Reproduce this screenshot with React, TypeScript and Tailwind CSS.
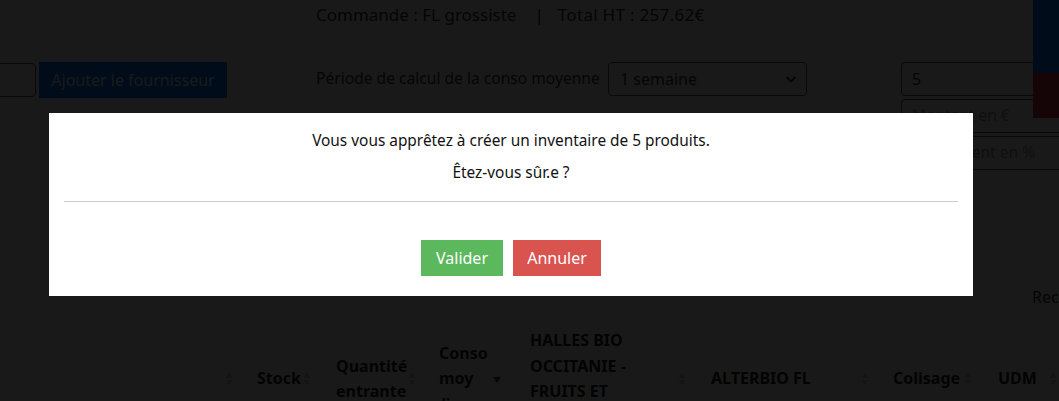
import React from "react";

const font = { fontFamily: '"Noto Sans", "DejaVu Sans", sans-serif' };

function SortIcon({ active }: { active?: boolean }) {
  if (active) {
    return (
      <svg width="8" height="10" viewBox="0 0 8 10" className="shrink-0">
        <path d="M0 3 L8 3 L4 9 Z" fill="#2c3e9e" />
      </svg>
    );
  }
  return (
    <svg width="8" height="14" viewBox="0 0 8 14" className="shrink-0">
      <path d="M0.5 6 L7.5 6 L4 1 Z" fill="#c8c8c8" />
      <path d="M0.5 8 L7.5 8 L4 13 Z" fill="#c8c8c8" />
    </svg>
  );
}

type Col = { label: string[]; w: string; pr: string; active?: boolean };

const cols: Col[] = [
  { label: ["Stock"], w: "w-[79px]", pr: "mr-[17px]" },
  { label: ["Quantité", "entrante"], w: "w-[103px]", pr: "mr-[15px]" },
  { label: ["Conso", "moy", "/jour"], w: "w-[91px]", pr: "mr-[21px]", active: true },
  { label: ["HALLES BIO", "OCCITANIE -", "FRUITS ET", "LÉGUMES"], w: "w-[181px]", pr: "mr-[17px]" },
  { label: ["ALTERBIO FL"], w: "w-[182px]", pr: "mr-[16px]" },
  { label: ["Colisage"], w: "w-[105px]", pr: "mr-[18px]" },
  { label: ["UDM"], w: "w-[80px]", pr: "mr-[13px]" },
];

export default function App() {
  return (
    <div className="relative w-[1059px] h-[401px] overflow-hidden bg-white text-[#333]" style={font}>
      {/* Underlying page */}
      <div className="pl-[316px] pt-[3px] text-[17px] leading-[24px] whitespace-nowrap">
        Commande : FL grossiste<span className="ml-[18px] mr-[14px]">|</span>
        <span className="tracking-[0.3px]">Total HT : 257.62€</span>
      </div>

      <div className="mt-[35px] flex items-start">
        <div className="flex items-center ml-[-100px] shrink-0">
          <div className="w-[136px] h-[34px] border border-[#555] rounded-[4px] bg-white" />
          <div className="ml-[3px] w-[188px] h-[36px] bg-[#007bff] text-white text-[16px] flex items-center justify-center whitespace-nowrap">
            Ajouter le fournisseur
          </div>
        </div>
        <div className="ml-[89px] w-[585px] shrink-0 flex items-center h-[34px]">
          <span className="w-[292px] text-[15.6px] whitespace-nowrap">Période de calcul de la conso moyenne</span>
          <div className="w-[199px] h-[34px] border border-[#555] rounded-[4px] flex items-center justify-between pl-[11px] pr-[8px] text-[16px]">
            <span>1 semaine</span>
            <svg width="14" height="14" viewBox="0 0 14 14">
              <path d="M2.5 5 L7 9.5 L11.5 5" stroke="#333" strokeWidth="1.8" fill="none" />
            </svg>
          </div>
        </div>
        <div className="flex flex-col gap-[3px] shrink-0">
          <div className="w-[200px] h-[34px] border border-[#555] rounded-[4px] flex items-center pl-[10px] text-[16px]">5</div>
          <div className="w-[200px] h-[34px] border border-[#555] rounded-[4px] flex items-center pl-[10px] text-[15.5px] text-[#999]">Montant en €</div>
          <div className="w-[200px] h-[34px] border border-[#555] rounded-[4px] flex items-center pl-[10px] text-[15.5px] text-[#999] whitespace-nowrap">Ajustement en %</div>
        </div>
      </div>

      <div className="mt-[117px] pl-[1032px] text-[16px] leading-[20px] whitespace-nowrap">Rechercher</div>

      <div className="mt-[22px] flex items-center h-[100px]">
        <div className="w-[249px] shrink-0 h-full flex items-center justify-end pr-[16px]">
          <SortIcon />
        </div>
        {cols.map((c, i) => (
          <div key={i} className={`${c.w} shrink-0 h-full flex items-center pl-[8px]`}>
            <div className="font-bold text-[16px] leading-[25.5px] text-[#222] whitespace-nowrap">
              {c.label.map((l, j) => (
                <div key={j}>{l}</div>
              ))}
            </div>
            <div className={`ml-auto ${c.pr} flex items-center`}>
              <SortIcon active={c.active} />
            </div>
          </div>
        ))}
      </div>

      {/* side tabs */}
      <div className="absolute right-0 top-0 w-[26px] flex flex-col">
        <div className="h-[73px] bg-[#007bff]" />
        <div className="h-[45px] bg-[#dc3545]" />
      </div>

      {/* backdrop */}
      <div className="absolute inset-0 bg-black/90" />

      {/* modal */}
      <div className="absolute left-[49px] top-[113px] w-[924px] h-[183px] bg-white px-[15px] pt-[16px] text-[#111]">
        <p className="text-center text-[15.4px] leading-[23px]">Vous vous apprêtez à créer un inventaire de 5 produits.</p>
        <p className="mt-[9px] text-center text-[15.4px] leading-[23px]">Êtez-vous sûr.e ?</p>
        <div className="mt-[17px] h-px bg-[#cccccc]" />
        <div className="mt-[38px] flex justify-center gap-[10px]">
          <button className="w-[82px] h-[36px] bg-[#5cb85c] text-white text-[16px]">Valider</button>
          <button className="w-[88px] h-[36px] bg-[#d9534f] text-white text-[16px]">Annuler</button>
        </div>
      </div>
    </div>
  );
}
